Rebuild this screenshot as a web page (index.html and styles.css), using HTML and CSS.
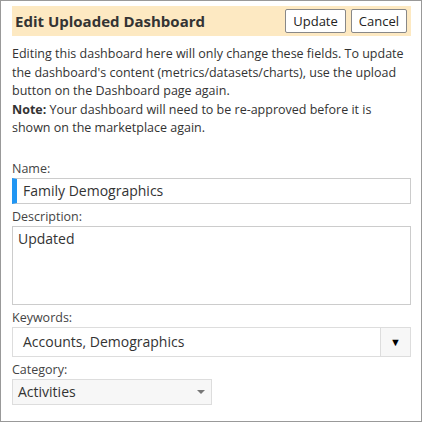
FILE: index.html
```html
<!DOCTYPE html>
<html lang="en">
<head>
    <meta charset="UTF-8">
    <meta name="viewport" content="width=device-width, initial-scale=1.0">
    <title>Edit Uploaded Dashboard</title>
    <link rel="stylesheet" href="styles.css">
</head>
<body>
    <div class="dialog">
        <div class="dialog-header">
            <h1>Edit Uploaded Dashboard</h1>
            <div class="header-buttons">
                <button class="btn">Update</button>
                <button class="btn">Cancel</button>
            </div>
        </div>
        <p class="intro">
            Editing this dashboard here will only change these fields. To update
            the dashboard's content (metrics/datasets/charts), use the upload
            button on the Dashboard page again.<br>
            <strong>Note:</strong> Your dashboard will need to be re-approved before it is
            shown on the marketplace again.
        </p>
        <form class="edit-form">
            <div class="field">
                <label>Name:</label>
                <div class="text-input focused">Family Demographics</div>
            </div>
            <div class="field">
                <label>Description:</label>
                <div class="text-area">Updated</div>
            </div>
            <div class="field">
                <label>Keywords:</label>
                <div class="combo">
                    <span class="combo-value">Accounts, Demographics</span>
                    <span class="combo-button">&#9660;</span>
                </div>
            </div>
            <div class="field">
                <label>Category:</label>
                <div class="select">
                    <span>Activities</span>
                    <span class="select-arrow"></span>
                </div>
            </div>
        </form>
    </div>
</body>
</html>
```

FILE: styles.css
```css
body {
    margin: 0;
    font-family: "Open Sans", "Noto Sans", sans-serif;
    color: #333;
    background: #fff;
}
.dialog {
    width: 422px;
    height: 422px;
    box-sizing: border-box;
    border: 1px solid #999;
    padding: 5px 10px 0 11px;
}
.dialog-header {
    display: flex;
    align-items: center;
    justify-content: space-between;
    height: 30px;
    padding: 0 4px 0 3px;
    background-color: #fde9c2;
}
.dialog-header h1 {
    margin: 0;
    font-size: 15px;
    font-weight: bold;
    color: #333;
}
.header-buttons {
    display: flex;
    gap: 5px;
}
.btn {
    height: 24px;
    padding: 0 7px;
    font-family: inherit;
    font-size: 13px;
    color: #222;
    background: #fff;
    border: 1px solid #888;
    border-radius: 2px;
}
.intro {
    margin: 9px 0 0 0;
    font-size: 12.5px;
    line-height: 18.5px;
}
.edit-form {
    margin-top: 22px;
}
.field {
    margin-bottom: 4px;
}
.field label {
    display: block;
    font-size: 12.5px;
    line-height: 18px;
    color: #444;
}
.text-input {
    height: 26px;
    box-sizing: border-box;
    border: 1px solid #ccc;
    padding-left: 6px;
    font-size: 14px;
    line-height: 24px;
}
.text-input.focused {
    border-left: 5px solid #2196f3;
}
.text-area {
    height: 79px;
    box-sizing: border-box;
    border: 1px solid #ccc;
    padding: 2px 5px;
    font-size: 14px;
    line-height: 20px;
}
.combo {
    display: flex;
    height: 30px;
    box-sizing: border-box;
    border: 1px solid #ddd;
}
.combo-value {
    flex: 1;
    padding-left: 10px;
    font-size: 14px;
    line-height: 28px;
}
.combo-button {
    width: 29px;
    border-left: 1px solid #ddd;
    background: #f7f7f7;
    color: #000;
    font-size: 11px;
    line-height: 28px;
    text-align: center;
}
.select {
    display: flex;
    align-items: center;
    justify-content: space-between;
    width: 200px;
    height: 26px;
    box-sizing: border-box;
    border: 1px solid #ddd;
    background: #f7f7f7;
    padding: 0 6px 0 5px;
    font-size: 14px;
}
.select-arrow {
    width: 0;
    height: 0;
    border-left: 4px solid transparent;
    border-right: 4px solid transparent;
    border-top: 4px solid #777;
}
```
